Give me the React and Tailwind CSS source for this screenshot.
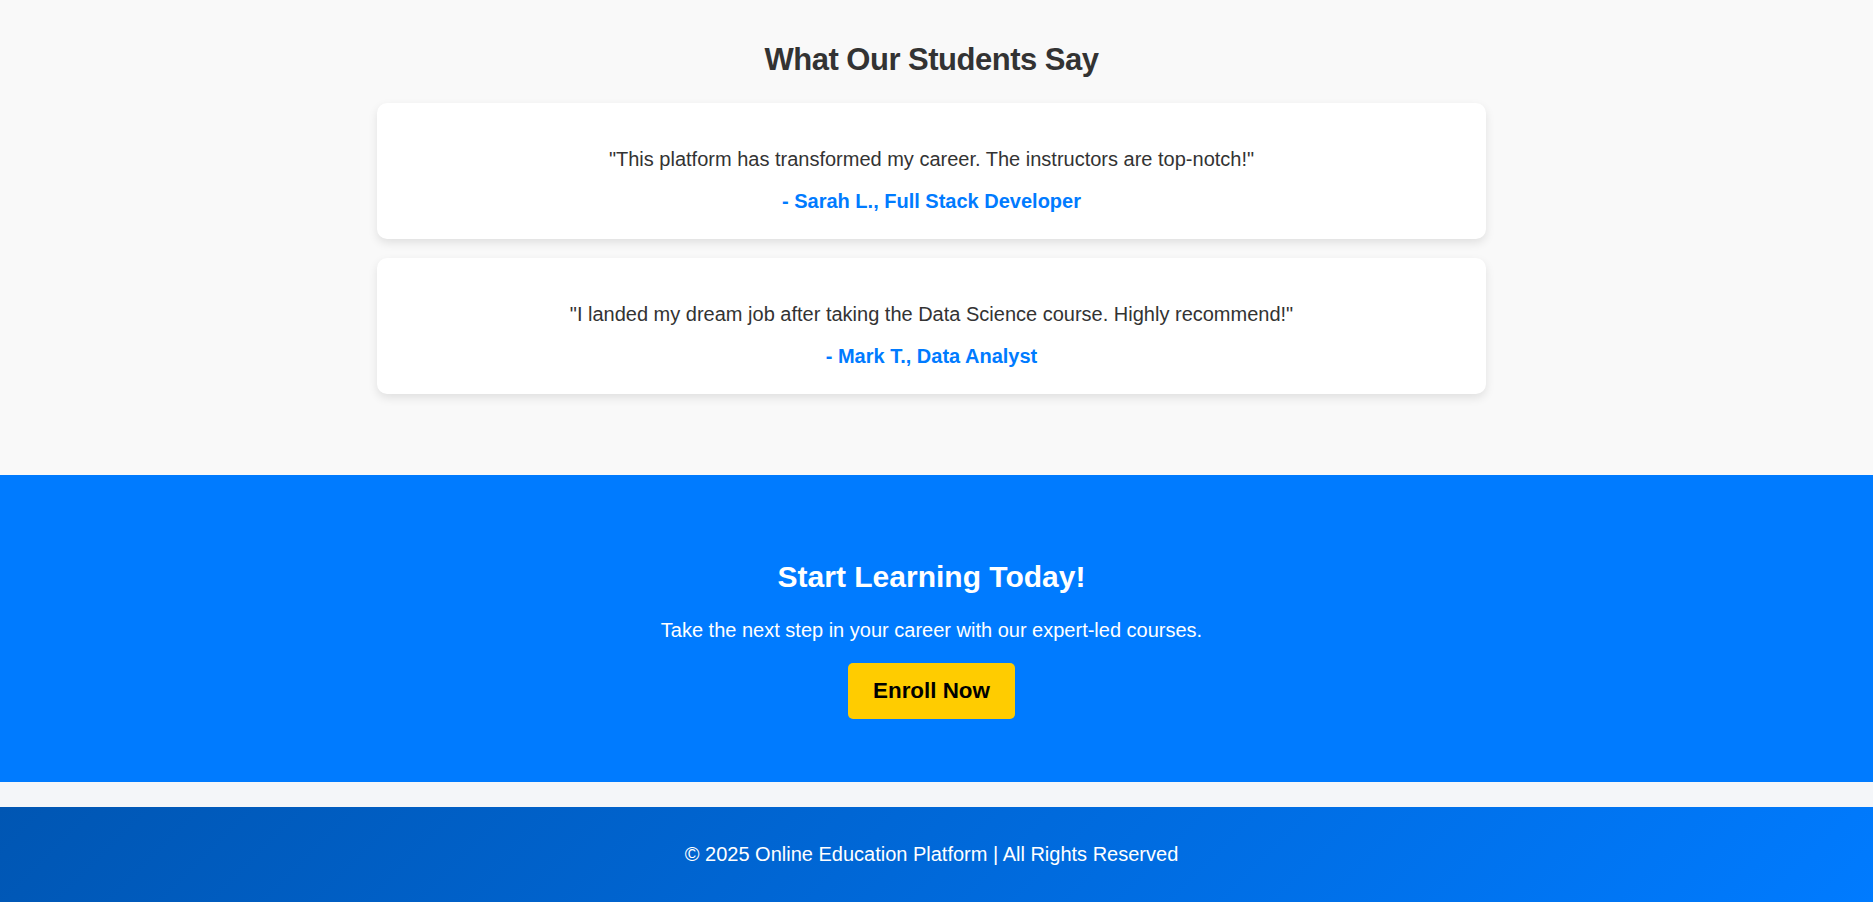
import React from 'react';

const testimonials = [
  {
    quote: '"This platform has transformed my career. The instructors are top-notch!"',
    author: '- Sarah L., Full Stack Developer',
  },
  {
    quote: '"I landed my dream job after taking the Data Science course. Highly recommend!"',
    author: '- Mark T., Data Analyst',
  },
];

const App = () => {
  return (
    <div className="min-h-screen bg-[#f4f6f9] font-['Liberation_Sans',Arial,sans-serif] leading-[1.15]">
      {/* testimonials */}
      <section className="bg-[#f9f9f9] pt-[42px] pb-[81px] pr-[10px]">
        <h2 className="text-center text-[31px] font-bold tracking-[-0.5px] text-[#333]">What Our Students Say</h2>
        <div className="mx-auto mt-[25px] flex w-[1109px] flex-col gap-[19px]">
          {testimonials.map(t => (
            <div
              key={t.author}
              className="rounded-[10px] bg-white pt-[45px] pb-[26px] text-center shadow-[0_4px_10px_rgba(0,0,0,0.1)]"
            >
              <p className="text-[20px] text-[#333]">{t.quote}</p>
              <p className="mt-[19px] text-[20px] font-bold text-[#007bff]">{t.author}</p>
            </div>
          ))}
        </div>
      </section>

      {/* call to action */}
      <section className="flex h-[307px] flex-col items-center bg-[#007bff] pt-[85px] pr-[10px] text-white">
        <h2 className="text-[30px] font-bold">Start Learning Today!</h2>
        <p className="mt-[25px] text-[20px]">Take the next step in your career with our expert-led courses.</p>
        <button className="mt-[21px] rounded-[5px] bg-[#ffcc00] px-[25px] py-[15px] text-[22.4px] leading-[26px] font-bold text-black">
          Enroll Now
        </button>
      </section>

      <div className="h-[25px]" />

      {/* footer */}
      <footer className="flex h-[95px] items-center justify-center bg-[linear-gradient(135deg,#0056b3,#007bff)] pr-[10px] text-[20px] text-white">
        © 2025 Online Education Platform | All Rights Reserved
      </footer>
    </div>
  );
};

export default App;
